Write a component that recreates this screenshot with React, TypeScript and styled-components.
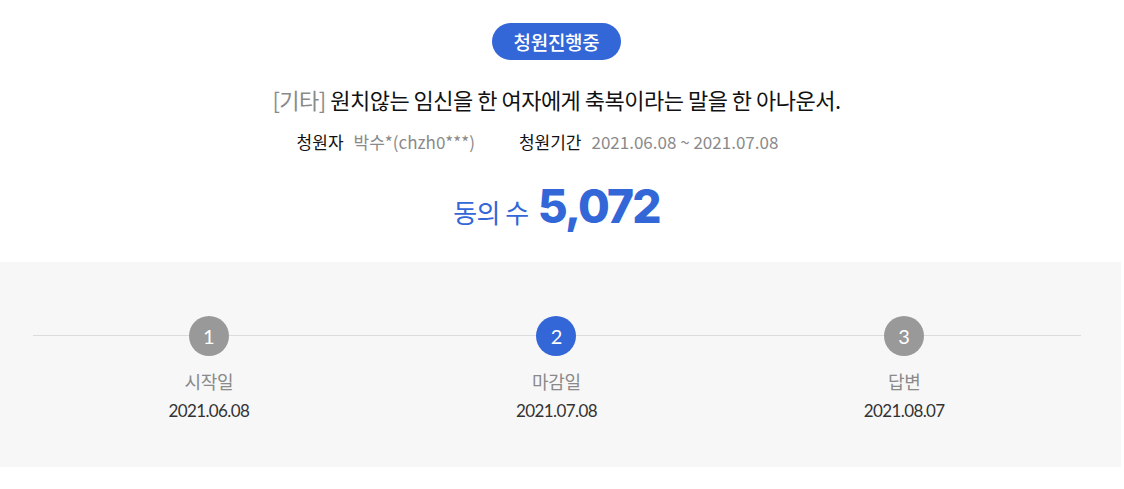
import React from 'react';
import styled, { createGlobalStyle } from 'styled-components';

const GlobalStyle = createGlobalStyle`
  html, body {
    margin: 0;
    padding: 0;
    background: #fff;
    font-family: "Noto Sans CJK KR", "Noto Sans", sans-serif;
  }
`

const Page = styled.div`
  width: 1121px;
`

const Header = styled.section`
  display: flex;
  flex-direction: column;
  align-items: center;
  padding: 23px 8px 0 0;
  height: 262px;
  box-sizing: border-box;
`

const Status = styled.span`
  display: inline-flex;
  align-items: center;
  justify-content: center;
  height: 37px;
  padding: 0 22px;
  border-radius: 19px;
  background: #3366d6;
  color: #fff;
  font-size: 19px;
  font-weight: 500;
  letter-spacing: -0.3px;
`

const Title = styled.h2`
  margin: 23px 0 0;
  font-size: 22px;
  font-weight: 400;
  line-height: 32px;
  color: #111;
  letter-spacing: -0.5px;
`

const Category = styled.span`
  color: #8a8a8a;
`

const Meta = styled.div`
  display: flex;
  gap: 44px;
  margin-top: 15px;
  padding-right: 38px;
  font-size: 17px;
  line-height: 24px;
`

const MetaItem = styled.div`
  display: flex;
  gap: 10px;
`

const MetaLabel = styled.span`
  color: #111;
`

const MetaValue = styled.span`
  color: #8a8a8a;
`

const Count = styled.div`
  display: flex;
  align-items: baseline;
  gap: 9px;
  margin-top: 22px;
  color: #3366d6;
`

const CountLabel = styled.span`
  font-size: 26px;
  letter-spacing: -0.5px;
`

const CountValue = styled.strong`
  font-family: "Inter", "Noto Sans", sans-serif;
  font-size: 46px;
  font-weight: 800;
  letter-spacing: -1.8px;
  line-height: 60px;
`

const Progress = styled.section`
  position: relative;
  background: #f7f7f7;
  height: 205px;
  padding: 54px 43px 0 35px;
  display: grid;
  grid-template-columns: repeat(3, 1fr);
  align-items: start;
  box-sizing: border-box;
  &:before {
    content: '';
    position: absolute;
    left: 33px;
    right: 40px;
    top: 73px;
    height: 1px;
    background: #dcdcdc;
  }
`

const Step = styled.div`
  position: relative;
  display: flex;
  flex-direction: column;
  align-items: center;
`

const Circle = styled.span<{ $active?: boolean }>`
  width: 40px;
  height: 40px;
  border-radius: 50%;
  display: flex;
  align-items: center;
  justify-content: center;
  background: ${(p) => (p.$active ? '#3366d6' : '#999')};
  color: #fff;
  font-family: "Lato", "Noto Sans", sans-serif;
  font-size: 20px;
`

const StepLabel = styled.span`
  margin-top: 12px;
  font-size: 18px;
  color: #8a8a8a;
  line-height: 26px;
  letter-spacing: -0.3px;
`

const StepDate = styled.span`
  margin-top: 6px;
  font-family: "Lato", "Noto Sans", sans-serif;
  font-size: 17px;
  color: #333;
  letter-spacing: -0.6px;
`

const steps = [
  { no: 1, label: '시작일', date: '2021.06.08' },
  { no: 2, label: '마감일', date: '2021.07.08', active: true },
  { no: 3, label: '답변', date: '2021.08.07' },
]

const App: React.FC = () => (
  <Page>
    <GlobalStyle />
    <Header>
      <Status>청원진행중</Status>
      <Title>
        <Category>[기타]</Category> 원치않는 임신을 한 여자에게 축복이라는 말을 한 아나운서.
      </Title>
      <Meta>
        <MetaItem>
          <MetaLabel>청원자</MetaLabel>
          <MetaValue>박수*(chzh0***)</MetaValue>
        </MetaItem>
        <MetaItem>
          <MetaLabel>청원기간</MetaLabel>
          <MetaValue>2021.06.08 ~ 2021.07.08</MetaValue>
        </MetaItem>
      </Meta>
      <Count>
        <CountLabel>동의 수</CountLabel>
        <CountValue>5,072</CountValue>
      </Count>
    </Header>
    <Progress>
      {steps.map((s) => (
        <Step key={s.no}>
          <Circle $active={s.active}>{s.no}</Circle>
          <StepLabel>{s.label}</StepLabel>
          <StepDate>{s.date}</StepDate>
        </Step>
      ))}
    </Progress>
  </Page>
)

export default App
